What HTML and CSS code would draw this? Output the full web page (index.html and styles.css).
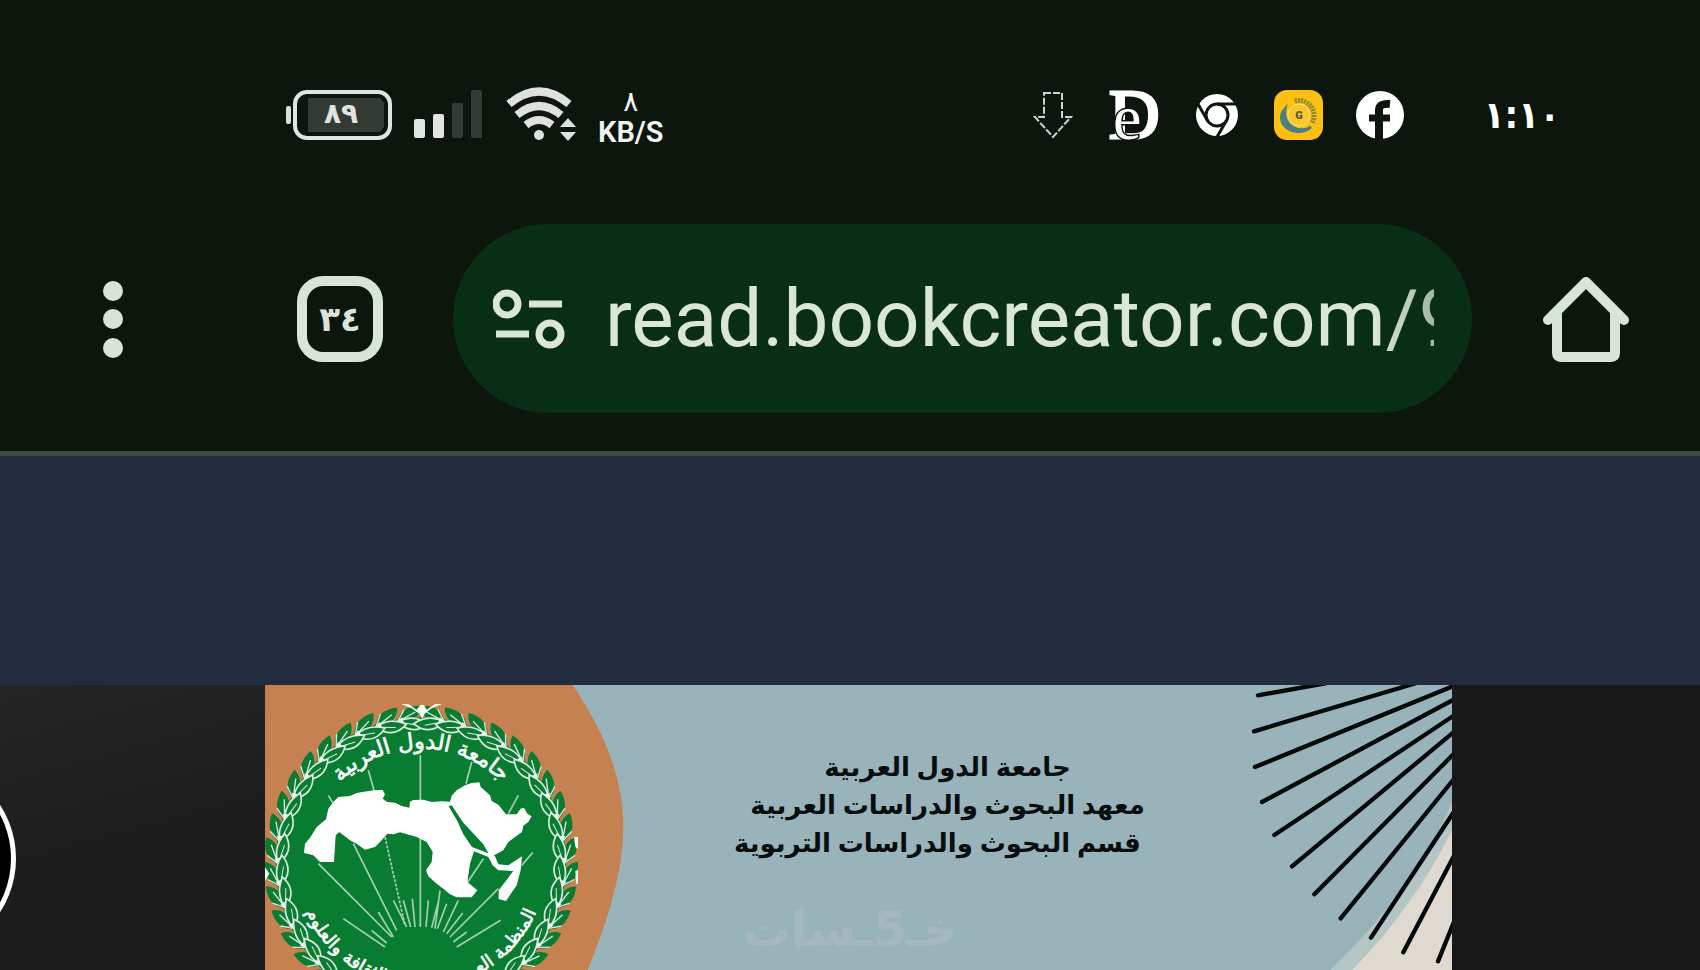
FILE: index.html
```html
<!DOCTYPE html>
<html lang="ar">
<head>
    <meta charset="UTF-8">
    <meta name="viewport" content="width=device-width, initial-scale=1.0">
    <title>read.bookcreator.com</title>
    <link rel="stylesheet" href="styles.css">
</head>
<body>
    <header class="browser">
        <div class="status-bar">
            <div class="status-group">
                <svg class="icon-battery" viewBox="0 0 106 50" role="img" aria-label="٨٩">
                    <rect x="0" y="16" width="5" height="18" rx="2" fill="#dcdedb"/>
                    <rect x="9" y="2" width="95" height="46" rx="12" fill="none" stroke="#e2e4e1" stroke-width="4"/>
                    <path d="M22 8H94L98 13V37L94 42H22Z" fill="#333b34"/>
                    <text x="55" y="33" class="battery-text">٨٩</text>
                </svg>
                <svg class="icon-signal" viewBox="0 0 68 50">
                    <rect x="0" y="29" width="11" height="19" rx="2" fill="#e2e4e1"/>
                    <rect x="19" y="24" width="11" height="24" rx="2" fill="#e2e4e1"/>
                    <rect x="38" y="13" width="11" height="35" rx="2" fill="#333b34"/>
                    <rect x="57" y="0" width="11" height="48" rx="2" fill="#333b34"/>
                </svg>
                <svg class="icon-wifi" viewBox="0 0 72 56">
                    <g fill="none" stroke="#dfe1de" stroke-width="8">
                        <path d="M5 17Q35 -8 65 17"/>
                        <path d="M13 28Q35 10 57 28"/>
                        <path d="M22 38Q35 28 48 38"/>
                    </g>
                    <circle cx="35" cy="48" r="5" fill="#dfe1de"/>
                    <path d="M56 40L64 31L72 40ZM56 45H72L64 54Z" fill="#dfe1de"/>
                </svg>
                <div class="net-speed">
                    <span>٨</span>
                    <span class="net-unit">KB/S</span>
                </div>
            </div>

            <div class="status-group notifications">
                <svg class="icon-app" viewBox="0 0 50 50">
                    <path d="M16 3H34V27H43L25 47L7 27H16Z" fill="none" stroke="#cfd2cf" stroke-width="2" stroke-dasharray="7 2"/>
                </svg>
                <svg class="icon-app" viewBox="0 0 50 50">
                    <text x="-1" y="48" class="logo-d">D</text>
                    <text x="3" y="49" class="logo-e">e</text>
                </svg>
                <svg class="icon-app" viewBox="0 0 50 50">
                    <circle cx="25" cy="25" r="21" fill="#fff"/>
                    <g fill="none" stroke="#0c160d" stroke-width="3">
                        <circle cx="25" cy="25" r="11"/>
                        <path id="chrome-arm" d="M25 14H47"/>
                        <use href="#chrome-arm" transform="rotate(120 25 25)"/>
                        <use href="#chrome-arm" transform="rotate(240 25 25)"/>
                    </g>
                </svg>
                <svg class="icon-app" viewBox="0 0 50 50">
                    <rect x="0" y="0" width="49" height="50" rx="13" fill="#fcbf12"/>
                    <path d="M11 19A17 17 0 0 0 37 37A17 14 0 0 1 11 19Z" fill="#4a7f83" stroke="#4a7f83" stroke-width="3"/>
                    <path d="M21 11A15 15 0 0 1 38 33" fill="none" stroke="#8b8c35" stroke-width="5" stroke-dasharray="2 1"/>
                    <circle cx="25" cy="25" r="11" fill="#fcc72b" stroke="#ffe27a" stroke-width="1"/>
                    <text x="25" y="29" class="logo-g">G</text>
                </svg>
                <svg class="icon-app" viewBox="0 0 50 50">
                    <circle cx="24" cy="25" r="24" fill="#fff"/>
                    <path d="M23 50V20Q23 13 34 14" fill="none" stroke="#0c160d" stroke-width="8"/>
                    <path d="M13 28H34" stroke="#0c160d" stroke-width="7"/>
                </svg>
            </div>
            <time class="clock">١:١٠</time>
        </div>

        <div class="toolbar">
            <button type="button" class="menu-btn" aria-label="القائمة">
                <svg viewBox="0 0 20 78">
                    <circle cx="10" cy="11" r="10"/>
                    <circle cx="10" cy="39" r="10"/>
                    <circle cx="10" cy="68" r="10"/>
                </svg>
            </button>
            <button type="button" class="tabs-btn">٣٤</button>
            <div class="address-bar">
                <svg class="icon-site" viewBox="0 0 72 60">
                    <g fill="none" stroke="#d9e6d8" stroke-width="7">
                        <circle cx="14" cy="15" r="11"/>
                        <path d="M36 15H69M3 45H36"/>
                        <circle cx="57" cy="45" r="11"/>
                    </g>
                </svg>
                <input type="text" class="url" aria-label="العنوان" value="read.bookcreator.com/9">
            </div>
            <a href="#" class="home-link" aria-label="الصفحة الرئيسية">
                <svg viewBox="0 0 86 86">
                    <path d="M14 37V77Q14 81 18 81H68Q72 81 72 77V37M5 44L43 6L81 44" fill="none" stroke="#d9e4d8" stroke-width="10" stroke-linecap="round" stroke-linejoin="round"/>
                </svg>
            </a>
        </div>
    </header>

    <main class="reader">
        <div class="reader-top"></div>
        <div class="stage">
            <button type="button" class="prev-btn" aria-label="السابق"></button>

            <article class="cover">
                <svg class="cover-emblem" viewBox="45 44 1080 858">
                    <defs>
                        <g id="leaf">
                            <path d="M-14 -426Q6 -478 68 -466Q58 -428 0 -418Z" fill="#0a7b31"/>
                            <path d="M-12 -428L46 -450M-14 -424L14 -462" fill="none" stroke="#d8ecdf" stroke-width="4"/>
                            <path d="M-10 -428Q36 -446 80 -410Q28 -378 -10 -428Z" fill="#0a7b31" stroke="#d8ecdf" stroke-width="5"/>
                            <path d="M-10 -428L46 -410" fill="none" stroke="#d8ecdf" stroke-width="3"/>
                            <path d="M-20 -424L4 -440L8 -420Z" fill="#f3faf5"/>
                        </g>
                        <path id="arc-top" d="M171 577A342 342 0 0 1 855 577"/>
                        <path id="arc-bottom" d="M137 577A376 376 0 0 0 889 577"/>
                    </defs>
                    <path d="M45 44H968C1060 180 1120 320 1120 470C1120 620 1060 780 1012 902H45Z" fill="#c68150"/>
                    <circle cx="513" cy="577" r="436" fill="#087d32"/>
                    <g id="wreath" transform="translate(513 577)"></g>
                    <path d="M453 101H475L500 118L511 104H522L530 118L555 101H577L545 114L524 130L517 146L508 130L485 114ZM972 500H984V536L976 530ZM976 602L984 598V640H978ZM45 590L58 610L45 632Z" fill="#f3faf5"/>
                    <path class="rays" d="M511 255V770M355 300L372 360M235 375L250 400M665 275L648 340M805 375L775 430M848 547L815 585M310 520L440 780M205 580L425 800M570 660L555 775M700 565L650 640M625 690L580 785M745 655L600 800M280 745L405 830M365 780L410 818M385 725L430 800M430 690L470 770M460 690L482 770M487 685L495 770M535 690L528 770M565 695L545 772M590 700L562 775M638 728L590 790M650 785L610 815M752 750L620 830"/>
                    <path class="rays" d="M405 500L465 765" stroke-dasharray="9 4"/>
                    <path d="M162 548L165 520L180 502L200 470L228 447L235 415L250 395L265 380L300 377L320 368L370 360L398 359L405 372L398 385L412 395L435 397L455 407L478 412L480 394L490 389L520 388L545 395L575 393L600 394L605 376L620 360L645 345L665 338L688 336L692 350L720 375L725 392L745 403L768 432L800 432L812 415L822 412L832 430L845 438L835 455L820 466L816 485L795 500L775 515L760 540L730 556L716 550L700 522L640 457L605 405L596 408L622 452L640 492L666 530L705 545L735 558L745 582L775 585L816 558L812 600L800 645L768 692L746 686L746 660L790 602L745 600L728 585L715 560L672 543L660 580L652 635L682 660L665 681L620 681L600 672L580 655L560 640L535 618L528 600L545 575L548 545L530 515L500 500L450 486L430 492L412 490L390 515L375 530L345 538L320 520L300 510L268 485L257 495L252 575L210 575L190 555Z" fill="#fff"/>
                    <text class="emblem-text"><textPath href="#arc-top" startOffset="50%">جامعة الدول العربية</textPath></text>
                    <text class="emblem-text emblem-text-small"><textPath href="#arc-bottom" startOffset="50%">المنظمة العربية للتربية والثقافة والعلوم</textPath></text>
                </svg>

                <div class="cover-title" dir="rtl">
                    <p>جامعة الدول العربية</p>
                    <p>معهد البحوث والدراسات العربية</p>
                    <p>&nbsp;&nbsp;&nbsp;قسم البحوث والدراسات التربوية</p>
                </div>

                <svg class="cover-rays" viewBox="0 44 666 858">
                    <path d="M666 395Q560 650 298 902H666Z" fill="#b3c5c5"/>
                    <path d="M666 480Q560 700 364 902H666Z" fill="#dfd9cf"/>
                    <path d="M84 75L290 38M72 183L560 38M75 290L680 43M96 395L680 83M133 494L680 130M186 588L680 178M253 672L680 242M332 744L680 316M423 802L680 412M520 846L680 541M624 873L680 735" fill="none" stroke="#04090a" stroke-width="13" stroke-linecap="round"/>
                </svg>
            </article>

            <div class="watermark" dir="rtl">خـ5ـسات</div>
        </div>
    </main>

    <script src="script.js"></script>
</body>
</html>
```
FILE: styles.css
```css
* {
    margin: 0;
    padding: 0;
    box-sizing: border-box;
}

body {
    min-height: 100vh;
    display: flex;
    flex-direction: column;
    background-color: #0c160d;
    font-family: Roboto, "Noto Sans", "DejaVu Sans", sans-serif;
    overflow: hidden;
}

button {
    border: none;
    background: none;
    cursor: pointer;
}

svg {
    display: block;
}

/* Barre d'état */
.browser {
    border-bottom: 5px solid #3f493f;
}

.status-bar {
    display: flex;
    align-items: center;
    padding: 85px 140px 79px 286px;
}

.status-group {
    display: flex;
    align-items: center;
    gap: 22px;
    height: 60px;
}

.notifications {
    gap: 32px;
    margin-left: auto;
    margin-right: 78px;
}

.icon-battery {
    width: 106px;
    height: 50px;
}

.icon-signal {
    width: 68px;
    height: 50px;
}

.icon-wifi {
    width: 72px;
    height: 56px;
}

.icon-app {
    width: 50px;
    height: 50px;
    overflow: visible;
}

.battery-text {
    font-family: "DejaVu Sans", sans-serif;
    font-size: 28px;
    font-weight: 700;
    fill: #e2e4e1;
    text-anchor: middle;
}

.net-speed {
    display: flex;
    flex-direction: column;
    align-items: center;
    padding-top: 4px;
    color: #f2f4f2;
    font-size: 28px;
    line-height: 30px;
}

.net-unit {
    font-size: 29px;
    font-weight: 600;
}

.logo-d {
    font-family: "Liberation Serif", serif;
    font-size: 70px;
    fill: #fff;
    stroke: #fff;
    stroke-width: 3px;
}

.logo-e {
    font-family: "Liberation Serif", serif;
    font-size: 64px;
    fill: #fff;
    stroke: #0c160d;
    stroke-width: 3px;
    paint-order: stroke;
}

.logo-g {
    font-size: 11px;
    font-weight: 900;
    fill: #4f5a2a;
    text-anchor: middle;
}

.clock {
    color: #fff;
    font-family: "DejaVu Sans Condensed", "DejaVu Sans", sans-serif;
    font-size: 38px;
    font-weight: 700;
    line-height: 60px;
}

/* Barre d'outils */
.toolbar {
    display: flex;
    align-items: center;
    padding: 0 71px 38px 103px;
}

.menu-btn {
    width: 20px;
    height: 78px;
    margin-right: 174px;
    fill: #d9e4d8;
}

.tabs-btn {
    width: 86px;
    height: 86px;
    margin-right: 70px;
    border: 10px solid #d9e4d8;
    border-radius: 26px;
    color: #d9e4d8;
    font-family: "DejaVu Sans", sans-serif;
    font-size: 34px;
    font-weight: 700;
}

.address-bar {
    flex: 1;
    min-width: 0;
    height: 189px;
    display: flex;
    align-items: center;
    gap: 40px;
    padding: 0 38px 0 40px;
    margin-right: 71px;
    border-radius: 95px;
    background-color: #092e16;
}

.icon-site {
    width: 72px;
    height: 60px;
    flex-shrink: 0;
}

.url {
    flex: 1;
    min-width: 0;
    border: none;
    outline: none;
    background: none;
    color: #d9e6d8;
    font-family: Roboto, sans-serif;
    font-size: 80px;
    line-height: 100px;
    -webkit-mask-image: linear-gradient(to right, #000 93%, rgba(0, 0, 0, 0.75));
    mask-image: linear-gradient(to right, #000 93%, rgba(0, 0, 0, 0.75));
}

.home-link {
    width: 86px;
    height: 86px;
}

/* Lecteur */
.reader {
    flex: 1;
    display: flex;
    flex-direction: column;
}

.reader-top {
    height: 229px;
    background-color: #242c3f;
}

.stage {
    position: relative;
    flex: 1;
    padding: 0 248px 0 265px;
    background: linear-gradient(165deg, #252525 0%, #1d1d1d 25%, #191919 60%);
    overflow: hidden;
}

/* Le bouton déborde du bord gauche */
.prev-btn {
    position: absolute;
    top: 75px;
    left: -181px;
    width: 197px;
    height: 197px;
    border: 5px solid #fff;
    border-radius: 50%;
    background-color: #000;
}

.cover {
    display: flex;
    justify-content: space-between;
    background-color: #98b4ba;
}

.cover-emblem {
    width: 360px;
    height: 286px;
    flex-shrink: 0;
}

.cover-rays {
    width: 222px;
    height: 286px;
    flex-shrink: 0;
}

.rays {
    fill: none;
    stroke: #a5d0b3;
    stroke-width: 5px;
}

.emblem-text {
    font-family: "DejaVu Sans", sans-serif;
    font-size: 66px;
    fill: #fff;
    stroke: #fff;
    stroke-width: 2px;
    text-anchor: middle;
}

.emblem-text-small {
    font-size: 54px;
}

.cover-title {
    flex: 1;
    padding: 62px 0 0 40px;
    color: #080d0e;
    font-family: "Noto Sans", "DejaVu Sans", sans-serif;
    font-size: 26px;
    font-weight: 700;
    line-height: 38px;
    text-align: center;
    white-space: nowrap;
}

.watermark {
    position: absolute;
    top: 200px;
    left: 0;
    right: 0;
    color: #a6b8bf;
    font-family: "DejaVu Sans", sans-serif;
    font-size: 48px;
    font-weight: 700;
    line-height: 88px;
    text-align: center;
}
```
FILE: script.js
```js
// Couronne de feuilles : un côté, puis son miroir
const wreath = document.getElementById('wreath');

for (let angle = 8; angle < 180; angle += 9) {
    ['rotate(' + -angle + ')', 'scale(-1 1) rotate(' + -angle + ')'].forEach(function (transform) {
        const leaf = document.createElementNS('http://www.w3.org/2000/svg', 'use');
        leaf.setAttribute('href', '#leaf');
        leaf.setAttribute('transform', transform);
        wreath.appendChild(leaf);
    });
}
```
